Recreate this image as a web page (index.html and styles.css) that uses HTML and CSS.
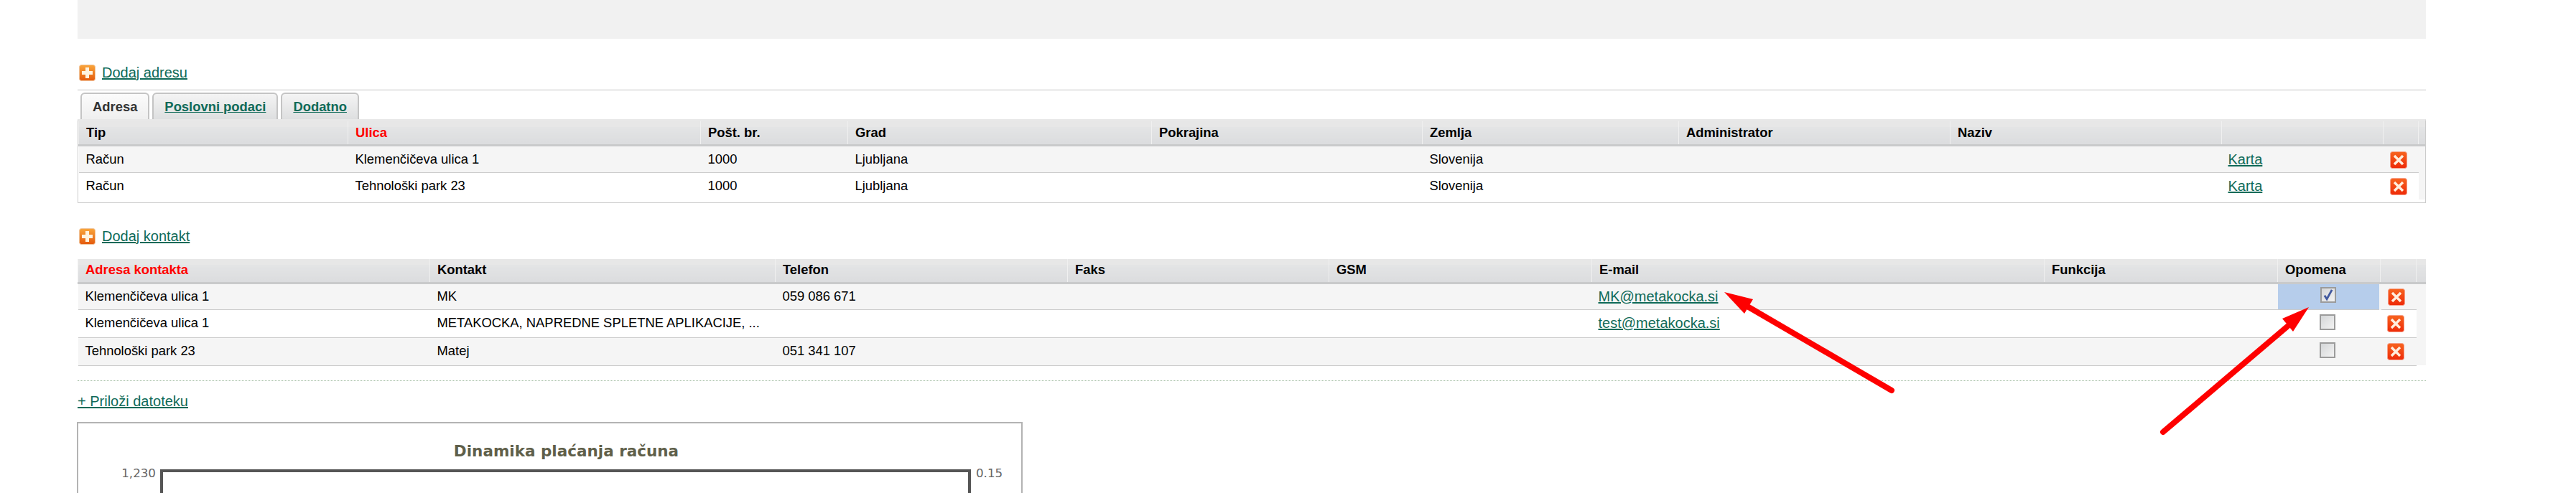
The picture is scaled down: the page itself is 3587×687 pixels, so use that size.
FILE: index.html
```html
<!DOCTYPE html>
<html>

<head lang="en">
    <meta charset="utf-8" />
    <title>Stranka</title>
    <link rel="stylesheet" href="styles.css">
</head>

<body>
    <svg class="defs" width="0" height="0">
        <defs>
            <linearGradient id="orange" x1="0" y1="0" x2="0" y2="1">
                <stop offset="0" stop-color="#f9a63c" />
                <stop offset="1" stop-color="#e4590c" />
            </linearGradient>
            <linearGradient id="red" x1="0" y1="0" x2="0" y2="1">
                <stop offset="0" stop-color="#f7641f" />
                <stop offset="1" stop-color="#ee2a08" />
            </linearGradient>
            <symbol id="icon-add" viewBox="0 0 23 23">
                <rect x="0.5" y="0.5" width="22" height="22" rx="3" fill="url(#orange)" stroke="#f0c49c" />
                <path d="M9 4h5v5h5v5h-5v5H9v-5H4V9h5z" fill="#fff3df" />
            </symbol>
            <symbol id="icon-del" viewBox="0 0 24 24">
                <rect x="0.5" y="0.5" width="23" height="23" rx="3" fill="url(#red)" stroke="#f7a08a" />
                <path d="M6 6l12 12M18 6L6 18" stroke="#ffeede" stroke-width="3.4" fill="none" />
            </symbol>
        </defs>
    </svg>

    <div class="band"></div>

    <div class="main">
        <p class="add-row add-address">
            <svg class="add-icon"><use href="#icon-add" /></svg>
            <a href="#">Dodaj adresu</a>
        </p>
        <hr class="rule">

        <ul class="tabs">
            <li class="active">Adresa</li>
            <li><a href="#">Poslovni podaci</a></li>
            <li><a href="#">Dodatno</a></li>
        </ul>

        <div class="address-box">
            <table class="grid">
                <colgroup>
                    <col class="w-a1"><col class="w-a2"><col class="w-a3"><col class="w-a4"><col class="w-a5"><col class="w-a6"><col class="w-a7"><col class="w-a8"><col class="w-a9"><col class="w-a10"><col class="w-gutter">
                </colgroup>
                <tr>
                    <th>Tip</th><th class="req">Ulica</th><th>Pošt. br.</th><th>Grad</th><th>Pokrajina</th><th>Zemlja</th><th>Administrator</th><th>Naziv</th><th></th><th></th><th></th>
                </tr>
                <tr class="odd">
                    <td>Račun</td><td>Klemenčičeva ulica 1</td><td>1000</td><td>Ljubljana</td><td></td><td>Slovenija</td><td></td><td></td><td><a href="#">Karta</a></td>
                    <td class="del"><svg class="del-icon"><use href="#icon-del" /></svg></td><td class="gutter"></td>
                </tr>
                <tr class="last">
                    <td>Račun</td><td>Tehnološki park 23</td><td>1000</td><td>Ljubljana</td><td></td><td>Slovenija</td><td></td><td></td><td><a href="#">Karta</a></td>
                    <td class="del"><svg class="del-icon"><use href="#icon-del" /></svg></td><td class="gutter"></td>
                </tr>
            </table>
        </div>

        <p class="add-row add-contact">
            <svg class="add-icon"><use href="#icon-add" /></svg>
            <a href="#">Dodaj kontakt</a>
        </p>

        <table class="grid contacts">
            <colgroup>
                <col class="w-c1"><col class="w-c2"><col class="w-c3"><col class="w-c4"><col class="w-c5"><col class="w-c6"><col class="w-c7"><col class="w-c8"><col class="w-c9"><col class="w-gutter">
            </colgroup>
            <tr>
                <th class="req">Adresa kontakta</th><th>Kontakt</th><th>Telefon</th><th>Faks</th><th>GSM</th><th>E-mail</th><th>Funkcija</th><th>Opomena</th><th></th><th></th>
            </tr>
            <tr class="odd r-first">
                <td>Klemenčičeva ulica 1</td><td>MK</td><td>059 086 671</td><td></td><td></td><td><a href="#">MK@metakocka.si</a></td><td></td>
                <td class="check on"><span class="box"><svg viewBox="0 0 14 14"><path d="M3 7.5l2.500 4L11 1.500" fill="none" stroke="#42599f" stroke-width="2.2" /></svg></span></td>
                <td class="del"><svg class="del-icon"><use href="#icon-del" /></svg></td><td class="gutter"></td>
            </tr>
            <tr>
                <td>Klemenčičeva ulica 1</td><td>METAKOCKA, NAPREDNE SPLETNE APLIKACIJE, ...</td><td></td><td></td><td></td><td><a href="#">test@metakocka.si</a></td><td></td>
                <td class="check"><span class="box"></span></td>
                <td class="del"><svg class="del-icon"><use href="#icon-del" /></svg></td><td class="gutter"></td>
            </tr>
            <tr class="odd">
                <td>Tehnološki park 23</td><td>Matej</td><td>051 341 107</td><td></td><td></td><td></td><td></td>
                <td class="check"><span class="box"></span></td>
                <td class="del"><svg class="del-icon"><use href="#icon-del" /></svg></td><td class="gutter"></td>
            </tr>
        </table>

        <hr class="dots">

        <p class="attach"><a href="#">+ Priloži datoteku</a></p>

        <div class="chart">
            <h3>Dinamika plaćanja računa</h3>
            <div class="plot-row">
                <span class="axis axis-left">1,230</span>
                <div class="plot"></div>
                <span class="axis axis-right">0.15</span>
            </div>
        </div>
    </div>

    <!-- rdeci puscici cez tabelo -->
    <svg class="arrows" width="3587" height="687">
        <path d="M2401 407L2441 417L2429 437z" fill="#fe0000" />
        <path d="M2435 428L2634 544" stroke="#fe0000" stroke-width="8" stroke-linecap="round" />
        <path d="M3215 428L3178 444L3193 462z" fill="#fe0000" />
        <path d="M3185 455L3012 602" stroke="#fe0000" stroke-width="8" stroke-linecap="round" />
    </svg>
</body>

</html>
```

FILE: styles.css
```css
html,
body {
    margin: 0;
    height: 687px;
    overflow: hidden;
    background-color: #fff;
}

body {
    position: relative;
    font-family: "Liberation Sans", Arial, sans-serif;
    font-size: 18.4px;
    color: #000;
}

a {
    color: #0f6a58;
    text-decoration: underline;
}

.defs {
    position: absolute;
}

.arrows {
    position: absolute;
    left: 0;
    top: 0;
}

.band {
    height: 54px;
    margin-left: 108px;
    width: 3270px;
    background-color: #f1f1f1;
}

.main {
    margin-left: 108px;
    width: 3270px;
}

/* add links */
.add-row {
    display: flex;
    align-items: center;
    height: 24px;
    margin: 0;
    padding-left: 2px;
    font-size: 20px;
}

.add-address {
    margin-top: 35px;
}

.add-contact {
    margin-top: 34px;
}

.add-icon {
    width: 23px;
    height: 23px;
    margin-right: 9px;
}

.rule {
    height: 3px;
    margin: 11px 0 0 0;
    border: none;
    background-color: #eeeeee;
}

/* tabs */
.tabs {
    display: flex;
    gap: 4px;
    height: 37px;
    margin: 2px 0 0 0;
    padding: 0 0 0 4px;
    list-style: none;
    font-weight: bold;
    font-size: 18.4px;
}

.tabs li {
    display: flex;
    align-items: center;
    box-sizing: border-box;
    padding: 0 15px;
    border: 2px solid #c4c4c4;
    border-bottom: none;
    border-radius: 6px 6px 0 0;
    background: linear-gradient(#f4f4f4, #dedfe0);
}

.tabs li.active {
    background: linear-gradient(#fbfbfb, #efefef);
    color: #333;
}

/* tables */
.address-box {
    box-sizing: border-box;
    height: 117px;
    border: 1px solid #ccc;
    border-top: 3px solid #e8e8e8;
}

.grid {
    width: 100%;
    table-layout: fixed;
    border-collapse: collapse;
}

.grid th {
    height: 33px;
    box-sizing: border-box;
    padding: 0 0 2px 10px;
    text-align: left;
    font-size: 18.4px;
    border-left: 1px solid #f0f0f0;
    border-bottom: 3px solid #c9cacb;
    background: linear-gradient(#e7e7e7 25%, #e3e4e5 26%, #dbdcde);
}

.address-box .grid th {
    padding-bottom: 0;
}

.grid th.req {
    color: #f00;
}

.grid td {
    height: 38px;
    box-sizing: border-box;
    padding: 7px 0 0 10px;
    vertical-align: top;
    border-bottom: 1px solid #ccc;
    white-space: nowrap;
}

.grid td a {
    margin-left: -1px;
    font-size: 20px;
}

.contacts td {
    height: 39px;
}

.contacts tr.r-first td {
    height: 37px;
    padding-top: 6px;
}

.grid tr.odd td {
    background-color: #f5f5f5;
}

.grid tr.last td {
    border-bottom: none;
}

.grid td.gutter,
.grid tr.odd td.gutter {
    padding: 0;
    border-bottom: none;
    background-color: #f5f5f5;
}

.grid td.del {
    padding-top: 7px;
    padding-left: 9px;
}

.contacts tr.r-first td.del {
    padding-top: 6px;
}

.del-icon {
    display: block;
    width: 24px;
    height: 24px;
}

.grid td.check {
    padding: 6px 4px 0 0;
    text-align: center;
}

.grid td.check.on,
.grid tr.odd td.check.on {
    padding: 4px 1px 0 0;
    border-right: 3px solid #f5f5f5;
    background-color: #b6cdeb;
}

.box {
    display: block;
    box-sizing: border-box;
    width: 22px;
    height: 22px;
    margin: 0 auto;
    border: 2px solid #9b9b9b;
    background: linear-gradient(135deg, #d4d6d8, #f3f3f3);
}

.box svg {
    display: block;
    width: 18px;
    height: 18px;
}

.w-a1 { width: 375px; }
.w-a2 { width: 491px; }
.w-a3 { width: 205px; }
.w-a4 { width: 423px; }
.w-a5 { width: 377px; }
.w-a6 { width: 357px; }
.w-a7 { width: 378px; }
.w-a8 { width: 378px; }
.w-a9 { width: 225px; }
.w-a10 { width: 49px; }
.w-gutter { width: auto; }

.w-c1 { width: 490px; }
.w-c2 { width: 481px; }
.w-c3 { width: 407px; }
.w-c4 { width: 364px; }
.w-c5 { width: 366px; }
.w-c6 { width: 630px; }
.w-c7 { width: 325px; }
.w-c8 { width: 143px; }
.w-c9 { width: 50px; }

.contacts {
    margin-top: 20px;
}

.dots {
    height: 0;
    margin: 20px 0 0 0;
    border: none;
    border-top: 1px dotted #a8c0a8;
}

.attach {
    margin: 18px 0 0 0;
    font-size: 20px;
    line-height: 20px;
}

/* chart */
.chart {
    box-sizing: border-box;
    width: 1317px;
    height: 100px;
    margin: 19px 0 0 -1px;
    border: 2px solid #b3b3b3;
    border-bottom: none;
    overflow: hidden;
}

.chart h3 {
    margin: 26px 0 0 0;
    padding-left: 46px;
    text-align: center;
    font-family: "DejaVu Sans", sans-serif;
    font-size: 21.5px;
    line-height: 26px;
    color: #5f5f4a;
}

.plot-row {
    display: flex;
    margin-top: 12px;
    padding-left: 60px;
}

.axis {
    width: 54px;
    margin-top: -5px;
    font-family: "DejaVu Sans", sans-serif;
    font-size: 16.7px;
    line-height: 20px;
    color: #666;
}

.axis-left {
    text-align: right;
    padding-right: 6px;
    box-sizing: border-box;
}

.axis-right {
    padding-left: 7px;
}

.plot {
    width: 1129px;
    height: 34px;
    box-sizing: border-box;
    border: 4px solid #555;
    border-bottom: none;
}
```
